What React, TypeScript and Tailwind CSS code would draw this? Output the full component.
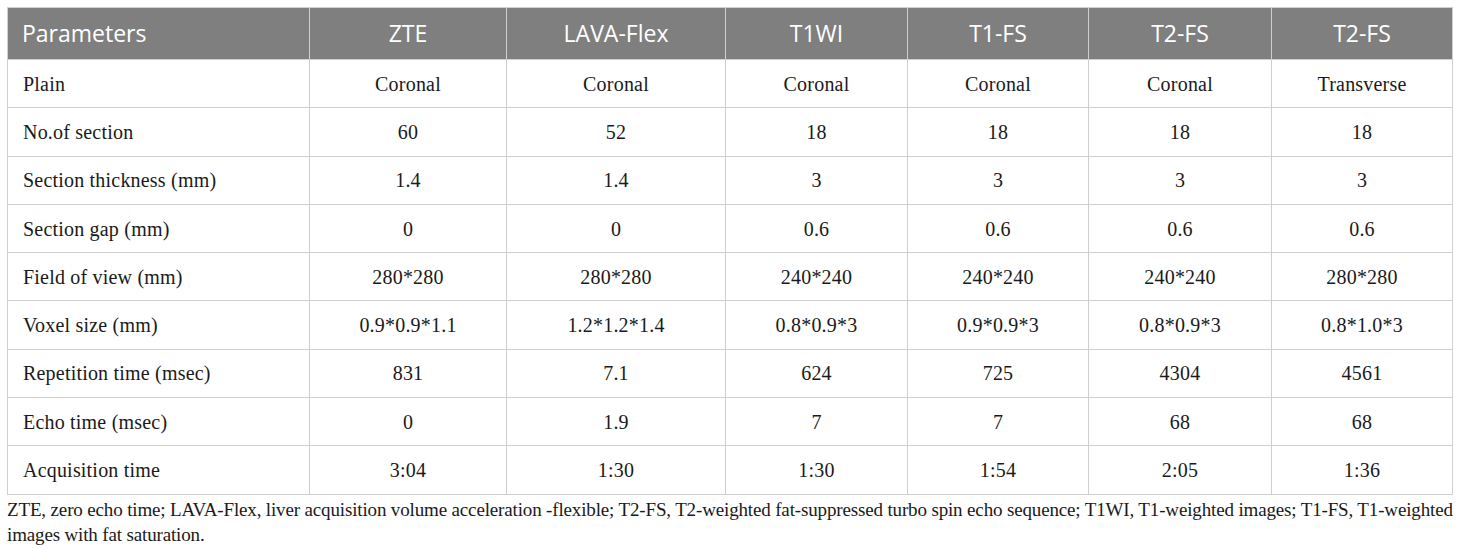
const headers = ['Parameters', 'ZTE', 'LAVA-Flex', 'T1WI', 'T1-FS', 'T2-FS', 'T2-FS'];

const rows: string[][] = [
  ['Plain', 'Coronal', 'Coronal', 'Coronal', 'Coronal', 'Coronal', 'Transverse'],
  ['No.of section', '60', '52', '18', '18', '18', '18'],
  ['Section thickness (mm)', '1.4', '1.4', '3', '3', '3', '3'],
  ['Section gap (mm)', '0', '0', '0.6', '0.6', '0.6', '0.6'],
  ['Field of view (mm)', '280*280', '280*280', '240*240', '240*240', '240*240', '280*280'],
  ['Voxel size (mm)', '0.9*0.9*1.1', '1.2*1.2*1.4', '0.8*0.9*3', '0.9*0.9*3', '0.8*0.9*3', '0.8*1.0*3'],
  ['Repetition time (msec)', '831', '7.1', '624', '725', '4304', '4561'],
  ['Echo time (msec)', '0', '1.9', '7', '7', '68', '68'],
  ['Acquisition time', '3:04', '1:30', '1:30', '1:54', '2:05', '1:36'],
];

const widths = ['w-[302px]', 'w-[197px]', 'w-[219px]', 'w-[182px]', 'w-[181px]', 'w-[183px]', 'w-[181px]'];

export default function App() {
  return (
    <div className="w-[1460px] h-[556px] bg-white px-[7px] pt-[7px]">
      <table className="w-[1446px] border-collapse table-fixed">
        <colgroup>
          {widths.map((w, i) => (
            <col key={i} className={w} />
          ))}
        </colgroup>
        <thead>
          <tr className="h-[52px] bg-[#7f7f7f]">
            {headers.map((h, i) => (
              <th
                key={i}
                className={`border border-[#cfcfcf] font-normal text-white text-[23px] font-['Open_Sans',sans-serif] ${
                  i === 0 ? 'text-left pl-[14px]' : 'text-center'
                }`}
              >
                {h}
              </th>
            ))}
          </tr>
        </thead>
        <tbody>
          {rows.map((r, ri) => (
            <tr key={ri} className="h-[48.3px]">
              {r.map((c, ci) => (
                <td
                  key={ci}
                  className={`border border-[#cfcfcf] text-[#1a1a1a] text-[20px] tracking-[0.2px] font-['Liberation_Serif',serif] ${
                    ci === 0 ? 'text-left pl-[15px]' : 'text-center'
                  }`}
                >
                  {c}
                </td>
              ))}
            </tr>
          ))}
        </tbody>
      </table>
      <p className="mt-[2px] text-[19px] leading-[25px] text-[#1a1a1a] font-['Liberation_Serif',serif] tracking-[-0.15px]">
        ZTE, zero echo time; LAVA-Flex, liver acquisition volume acceleration -flexible; T2-FS, T2-weighted fat-suppressed turbo spin echo sequence; T1WI, T1-weighted images; T1-FS, T1-weighted images with fat saturation.
      </p>
    </div>
  );
}
